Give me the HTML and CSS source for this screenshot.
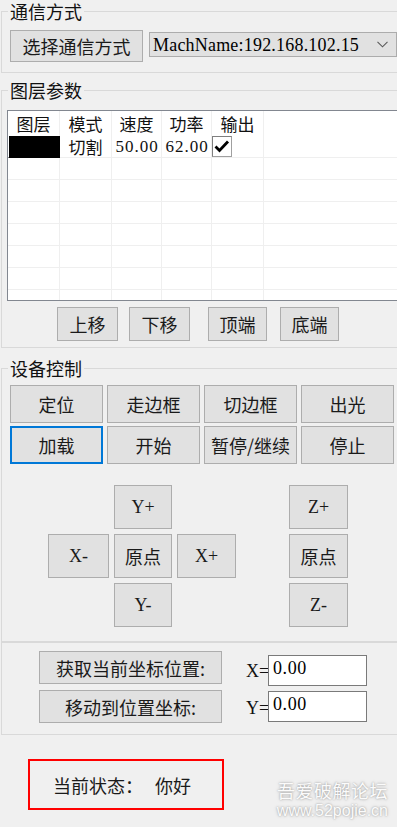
FILE: index.html
```html
<!DOCTYPE html>
<html lang="zh-CN">
<head>
<meta charset="utf-8">
<title>设备控制</title>
<link rel="stylesheet" href="styles.css">
</head>
<body>
<div class="app">
  <section class="group group-comm">
    <div class="group-title">通信方式</div>
    <div class="comm-row">
      <button class="btn btn-comm">选择通信方式</button>
      <div class="combo">
        <span class="combo-text">MachName:192.168.102.15</span>
        <svg class="chev" width="11" height="7" viewBox="0 0 11 7"><polyline points="0.5,0.8 5.5,5.8 10.5,0.8" fill="none" stroke="#5a5a5a" stroke-width="1.1"/></svg>
      </div>
    </div>
  </section>

  <section class="group group-layer">
    <div class="group-title">图层参数</div>
    <div class="layer-table">
      <div class="c h">图层</div><div class="c h">模式</div><div class="c h">速度</div><div class="c h">功率</div><div class="c h">输出</div><div class="c h fill"></div>
      <div class="c swatch"></div><div class="c">切割</div><div class="c num">50.00</div><div class="c num">62.00</div><div class="c chk-cell"><span class="chk"><svg width="18" height="19" viewBox="0 0 18 19"><path d="M2.5 9.5 L6.5 13.5 L15 4.5" fill="none" stroke="#000" stroke-width="2.8" stroke-linejoin="miter"/></svg></span></div><div class="c fill"></div>
      <div class="c"></div><div class="c"></div><div class="c"></div><div class="c"></div><div class="c"></div><div class="c fill"></div>
      <div class="c"></div><div class="c"></div><div class="c"></div><div class="c"></div><div class="c"></div><div class="c fill"></div>
      <div class="c"></div><div class="c"></div><div class="c"></div><div class="c"></div><div class="c"></div><div class="c fill"></div>
      <div class="c"></div><div class="c"></div><div class="c"></div><div class="c"></div><div class="c"></div><div class="c fill"></div>
      <div class="c"></div><div class="c"></div><div class="c"></div><div class="c"></div><div class="c"></div><div class="c fill"></div>
      <div class="c"></div><div class="c"></div><div class="c"></div><div class="c"></div><div class="c"></div><div class="c fill"></div>
      <div class="c"></div><div class="c"></div><div class="c"></div><div class="c"></div><div class="c"></div><div class="c fill"></div>
    </div>
    <div class="layer-btns">
      <button class="btn btn-lw">上移</button>
      <button class="btn btn-lw">下移</button>
      <button class="btn btn-ln btn-top">顶端</button>
      <button class="btn btn-ln btn-bottom">底端</button>
    </div>
  </section>

  <section class="group group-dev">
    <div class="group-title">设备控制</div>
    <div class="dev-grid">
      <button class="btn">定位</button>
      <button class="btn">走边框</button>
      <button class="btn">切边框</button>
      <button class="btn">出光</button>
      <button class="btn btn-focus">加载</button>
      <button class="btn">开始</button>
      <button class="btn">暂停/继续</button>
      <button class="btn">停止</button>
    </div>
    <div class="jog">
      <button class="btn lat j-yp">Y+</button>
      <button class="btn lat j-zp">Z+</button>
      <button class="btn lat j-xm">X-</button>
      <button class="btn j-o1">原点</button>
      <button class="btn lat j-xp">X+</button>
      <button class="btn j-o2">原点</button>
      <button class="btn lat j-ym">Y-</button>
      <button class="btn lat j-zm">Z-</button>
    </div>
  </section>

  <section class="group group-coord">
    <div class="coord">
      <div class="coord-row">
        <button class="btn btn-coord">获取当前坐标位置:</button>
        <span class="coord-label">X=</span>
        <input class="coord-input in-x" type="text" value="0.00">
      </div>
      <div class="coord-row">
        <button class="btn btn-coord">移动到位置坐标:</button>
        <span class="coord-label">Y=</span>
        <input class="coord-input in-y" type="text" value="0.00">
      </div>
    </div>
  </section>

  <div class="status"><span>当前状态：</span><span class="status-val">你好</span></div>

  <div class="watermark">
    <div class="wm-cn">吾爱破解论坛</div>
    <div class="wm-url">www.52pojie.cn</div>
  </div>
</div>
</body>
</html>
```

FILE: styles.css
```css
* { box-sizing: border-box; }
html, body { margin: 0; padding: 0; }
body {
  background: #f0f0f0;
  font-family: "Noto Sans CJK SC", sans-serif;
  font-size: 18px;
  color: #000;
}
.app {
  position: relative;
  width: 397px;
  height: 827px;
  overflow: hidden;
  padding-top: 11px;
}

/* group boxes */
.group {
  width: 440px;
  margin-left: 1px;
  border: 1px solid #d9d9d9;
  border-right: 0;
}
.group-title {
  width: max-content;
  margin: -11px 0 0 6px;
  padding: 0 2px;
  height: 20px;
  line-height: 20px;
  background: #f0f0f0;
  font-size: 18px;
  color: #111;
}

/* buttons */
.btn {
  margin: 0;
  padding: 0;
  background: #e1e1e1;
  border: 1px solid #adadad;
  border-radius: 0;
  font-family: "Noto Sans CJK SC", sans-serif;
  font-size: 18px;
  color: #1a1a1a;
  line-height: 1;
  display: flex;
  align-items: center;
  justify-content: center;
  white-space: nowrap;
}
.btn.lat {
  font-family: "Liberation Serif", serif;
  font-size: 18px;
}
.btn-focus { border: 2px solid #0078d7; }

/* group 1 */
.comm-row {
  display: flex;
  align-items: flex-start;
  gap: 6px;
  padding: 9px 0 10px 8px;
}
.btn-comm { width: 133px; height: 32px; }
.combo {
  width: 248px;
  height: 25px;
  margin-top: 2px;
  background: #e1e1e1;
  border: 1px solid #acacac;
  display: flex;
  align-items: center;
  padding-left: 3px;
}
.combo-text {
  font-family: "Liberation Serif", serif;
  font-size: 18px;
  letter-spacing: 0.2px;
  line-height: 1;
}
.chev { margin-left: auto; margin-right: 8px; }

/* group 2 */
.group-layer { margin-top: 17px; }
.layer-table {
  margin: 10px 0 0 5px;
  height: 191px;
  border: 1px solid #828790;
  overflow: hidden;
  background: #fff;
  display: grid;
  grid-template-columns: 52px 52px 50px 50px 52px 1fr;
  grid-template-rows: 25px;
  grid-auto-rows: 22px;
  align-content: start;
}
.c {
  border-right: 1px solid #efefef;
  border-bottom: 1px solid #efefef;
  display: flex;
  align-items: center;
  justify-content: center;
  font-size: 17px;
  line-height: 1;
  color: #111;
}
.c.h { border-bottom: 0; }
.c.fill { border-right: 0; }
.c.num {
  font-family: "Liberation Serif", serif;
  font-size: 17px;
  letter-spacing: 1px;
  padding-left: 1px;
}
.c.swatch {
  background: #000;
  border-left: 1px solid #fff;
  border-right-color: #000;
  border-bottom-color: #000;
}
.c.chk-cell { justify-content: flex-start; align-items: stretch; }
.chk {
  width: 20px;
  background: #fff;
  border: 1px solid #a0a0a0;
  border-left-color: #7f7f7f;
  border-top-color: #7f7f7f;
  display: flex;
  align-items: center;
  justify-content: center;
}
.layer-btns {
  display: flex;
  gap: 11px;
  padding: 6px 0 6px 55px;
}
.layer-btns .btn { height: 34px; }
.btn-lw { width: 61px; }
.btn-ln { width: 59px; }
.btn-top { margin-left: 7px; }
.btn-bottom { margin-left: 2px; }

/* group 3 */
.group-dev { margin-top: 20px; }
.dev-grid {
  display: grid;
  grid-template-columns: repeat(4, 93px);
  grid-auto-rows: 38px;
  gap: 3px 4px;
  padding: 7px 0 0 8px;
}
.jog {
  display: grid;
  grid-template-columns: 61px 58px 59px 43px 59px;
  grid-template-rows: 44px 44px 44px;
  gap: 5px;
  margin: 21px 0 14px 46px;
  width: max-content;
}
.j-yp { grid-area: 1 / 2; }
.j-zp { grid-area: 1 / 5; }
.j-xm { grid-area: 2 / 1; }
.j-o1 { grid-area: 2 / 2; }
.j-xp { grid-area: 2 / 3; }
.j-o2 { grid-area: 2 / 5; }
.j-ym { grid-area: 3 / 2; }
.j-zm { grid-area: 3 / 5; }

/* group 4 */
.coord {
  display: flex;
  flex-direction: column;
  gap: 4px;
  padding: 8px 0 11px 37px;
}
.coord-row { display: flex; align-items: flex-start; }
.btn-coord { width: 183px; height: 33px; }
.coord-label {
  width: 22px;
  margin: 0 0 5px 24px;
  align-self: flex-end;
  font-family: "Liberation Serif", serif;
  font-size: 18px;
  line-height: 20px;
  color: #111;
}
.coord-input {
  width: 99px;
  height: 31px;
  margin: 0;
  border: 1px solid #7a7a7a;
  border-radius: 0;
  background: #fff;
  padding: 0 0 4px 4px;
  font-family: "Liberation Serif", serif;
  font-size: 18px;
  letter-spacing: 0.6px;
  color: #000;
  outline: none;
}
.in-x { margin-top: 4px; }
.in-y { margin-top: 1px; }

/* status */
.status {
  margin: 24px 0 0 28px;
  width: 196px;
  height: 51px;
  border: 2px solid #ff0000;
  display: flex;
  align-items: center;
  padding-left: 23px;
  font-size: 18px;
  color: #1a1a1a;
  line-height: 1;
}
.status-val { margin-left: 12px; }

/* watermark overlay */
.watermark {
  position: absolute;
  right: 9px;
  bottom: 7px;
  text-align: center;
  color: #fbfbfb;
  text-shadow: 0 0 2px rgba(0,0,0,0.35), 0 0 4px rgba(0,0,0,0.15);
}
.wm-cn {
  font-family: "Noto Sans CJK SC", sans-serif;
  font-size: 18px;
  line-height: 20px;
  letter-spacing: 0.5px;
}
.wm-url {
  margin-top: 2px;
  font-family: "Liberation Sans", sans-serif;
  font-size: 16px;
  line-height: 18px;
}
```
